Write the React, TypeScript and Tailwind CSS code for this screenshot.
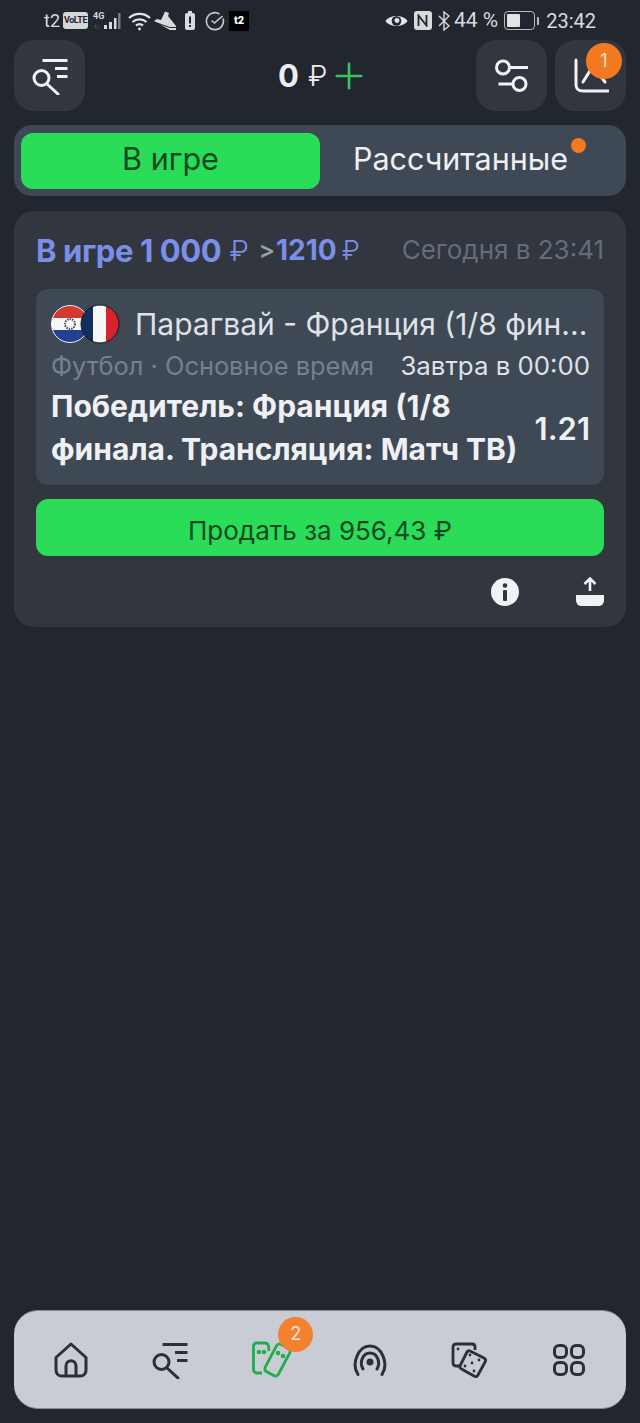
import { Plus } from "lucide-react";

const statusText = "font-['Roboto',sans-serif] text-[#d9dadc]";

function SearchListIcon({ className, color }: { className?: string; color: string }) {
  return (
    <svg viewBox="0 0 38 38" className={className} fill="none" stroke={color} strokeWidth="3">
      <path d="M11.5 3.5h25M24 11.5h12.5M26 19.5h10.5" />
      <circle cx="10.5" cy="21" r="7.5" />
      <path d="M16 27l11 10" strokeLinecap="round" />
    </svg>
  );
}

function StatusBar() {
  return (
    <div className="-mx-[14px] flex h-10 shrink-0 items-center justify-between pl-[44px] pr-[44px] pt-[1px]">
      <div className="flex items-center">
        <span className={`${statusText} text-[18px] leading-none`}>t2</span>
        <span className="ml-[3px] flex h-[17px] w-[25px] items-center justify-center rounded-[3px] bg-[#d6d7d9] font-['Roboto',sans-serif] text-[9px] font-bold leading-none tracking-[-0.4px] text-[#22262f]">
          VoLTE
        </span>
        <svg viewBox="0 0 32 22" className="ml-[5px] h-[22px] w-[32px]" fill="#d9dadc">
          <text x="0" y="9" fontSize="9" fontWeight="700" fontFamily="Roboto, sans-serif">4G</text>
          <text x="1" y="19" fontSize="6" fill="#777b82" fontFamily="Roboto, sans-serif">1↓</text>
          <rect x="11" y="15" width="3" height="4" />
          <rect x="16" y="12" width="3" height="7" />
          <rect x="21" y="8" width="2.5" height="11" fill="#d9dadc" />
          <rect x="25" y="3" width="2.5" height="16" fill="#777b82" />
        </svg>
        <svg viewBox="0 0 24 20" className="ml-[3px] h-[20px] w-[24px]" fill="none" stroke="#e2e3e5" strokeWidth="2.2">
          <path d="M1 7c6-5.500 15-5.500 21 0M4.500 11c4-3.500 10-3.500 14 0M8 14.500c2-1.500 5-1.500 7 0" />
          <circle cx="11.500" cy="18" r="1.400" fill="#e2e3e5" stroke="none" />
        </svg>
        {/* sneaker */}
        <svg viewBox="0 0 22 20" className="ml-[2px] h-[20px] w-[22px]">
          <path d="M11 0.500l4 1.500-1 3 8 10v4h-6L0 10l3-2 4 1 2-4z" fill="#d9dadc" />
          <path d="M1.500 11.500L16 16.500h6" fill="none" stroke="#22262f" strokeWidth="1" />
        </svg>
        <svg viewBox="0 0 12 20" className="ml-[8px] h-[20px] w-[12px]">
          <rect x="4" y="0" width="4" height="2" fill="#d9dadc" />
          <rect x="1" y="2" width="10" height="17" rx="2" fill="#d9dadc" />
          <rect x="5" y="5.500" width="2" height="7" fill="#22262f" />
          <rect x="5" y="14" width="2" height="2" fill="#22262f" />
        </svg>
        <svg viewBox="0 0 20 20" className="ml-[9px] h-[20px] w-[20px]" fill="none" stroke="#c9cacc" strokeWidth="1.6">
          <path d="M18 7.500A8.500 8.500 0 1 1 14.500 3" />
          <path d="M6.500 9.500l3 2.500 8-7" />
        </svg>
        <span className="ml-[4px] flex h-[20px] w-[20px] items-center justify-center bg-black font-['Roboto',sans-serif] text-[11px] font-black leading-none text-white">
          t2
        </span>
      </div>
      <div className="flex items-center">
        <svg viewBox="0 0 24 16" className="h-[16px] w-[23px]">
          <path d="M0.500 8C5 1 19 1 23.500 8C19 15 5 15 0.500 8Z" fill="#e2e3e5" />
          <circle cx="12" cy="8" r="5" fill="#22262f" />
          <circle cx="12.500" cy="7.500" r="2.600" fill="#e2e3e5" />
        </svg>
        <span className="ml-[6px] flex h-[19px] w-[18px] items-center justify-center rounded-[3px] bg-[#d9dadc]">
          <svg viewBox="0 0 13 13" className="h-[13px] w-[13px]" fill="none" stroke="#22262f" strokeWidth="1.8">
            <path d="M2.500 12V1.500l8 10V1" />
          </svg>
        </span>
        <svg viewBox="0 0 12 20" className="ml-[6px] h-[20px] w-[12px]" fill="none" stroke="#d9dadc" strokeWidth="1.400">
          <path d="M1 5l10 10-5 4V1l5 4L1 15" />
        </svg>
        <span className={`${statusText} ml-[4px] whitespace-nowrap text-[21px] leading-none`}>44 %</span>
        <span className="ml-[6px] flex h-[19px] w-[31px] items-center rounded-[4px] border-[1.5px] border-[#b9babc] p-[2px]">
          <span className="h-full w-[13px] rounded-[1px] bg-[#e2e3e5]" />
        </span>
        <span className="ml-[2px] h-[8px] w-[2px] rounded-r-[1px] bg-[#b9babc]" />
        <span className={`${statusText} ml-[7px] text-[20px] leading-none`}>23:42</span>
      </div>
    </div>
  );
}

function TopBar() {
  return (
    <div className="flex h-[71px] shrink-0 items-center">
      <button className="flex h-[71px] w-[71px] items-center justify-center rounded-[20px] bg-[#31363f]">
        <SearchListIcon className="h-[38px] w-[38px]" color="#f1f2f4" />
      </button>
      <div className="flex flex-1 items-center pl-[193px]">
        <span className="text-[31px] font-bold leading-none text-[#eceef0]">0</span>
        <span className="ml-[9px] text-[29px] font-light leading-none text-[#eceef0]">₽</span>
        <Plus className="ml-[1px] h-[42px] w-[42px] text-[#3ec15f]" strokeWidth={1.5} />
      </div>
      <div className="flex gap-[8px]">
        <button className="flex h-[71px] w-[71px] items-center justify-center rounded-[20px] bg-[#31363f]">
          <svg viewBox="0 0 36 36" className="h-[36px] w-[36px]" fill="none" stroke="#f1f2f4" strokeWidth="3">
            <circle cx="9" cy="9.500" r="6.500" />
            <path d="M15.500 9.500H34" />
            <circle cx="25.500" cy="26" r="6.500" />
            <path d="M4.500 26h14.500" />
          </svg>
        </button>
        <button className="relative flex h-[71px] w-[71px] items-center justify-center rounded-[20px] bg-[#31363f]">
          <svg viewBox="0 0 36 36" className="h-[36px] w-[36px]" fill="none" stroke="#f1f2f4" strokeWidth="3" strokeLinecap="round">
            <path d="M3 2v25c0 4 3 6 7 6h25" />
            <path d="M10 24l10-16 12 16" />
          </svg>
          <span className="absolute right-[4px] top-[3px] flex h-[36px] w-[36px] items-center justify-center rounded-full bg-[#f47a22] text-[18px] leading-none text-[#f6e3d4]">
            1
          </span>
        </button>
      </div>
    </div>
  );
}

function Tabs() {
  return (
    <div className="mt-[14px] flex h-[71px] shrink-0 items-center rounded-[18px] bg-[#3f4855] pl-[7px] pr-[7px]">
      <div className="flex h-[56px] w-[299px] items-center justify-center rounded-[12px] bg-[#2bdc58] pb-[2px] text-[30.5px] leading-none text-[#0f4a22]">
        В игре
      </div>
      <div className="relative flex h-[56px] flex-1 items-center justify-center pb-[2px] pr-[18px] text-[30.5px] leading-none text-[#eef0f3]">
        Рассчитанные
        <span className="absolute right-[33px] top-[5px] h-[15px] w-[15px] rounded-full bg-[#f47a22]" />
      </div>
    </div>
  );
}

function Flags() {
  return (
    <div className="relative h-[40px] w-[68px] shrink-0">
      <svg viewBox="0 0 38 38" className="absolute left-0 top-[1px] h-[38px] w-[38px]">
        <clipPath id="py">
          <circle cx="19" cy="19" r="18.500" />
        </clipPath>
        <g clipPath="url(#py)">
          <rect width="38" height="13" fill="#d5382f" />
          <rect y="13" width="38" height="12" fill="#f7f7f7" />
          <rect y="25" width="38" height="13" fill="#233f93" />
          <circle cx="19" cy="19" r="5" fill="none" stroke="#4b4f55" strokeWidth="2" strokeDasharray="1.500 1" />
        </g>
        <circle cx="19" cy="19" r="18.500" fill="none" stroke="#f1f1f1" strokeWidth="1" />
      </svg>
      <svg viewBox="0 0 40 40" className="absolute left-[29px] top-0 h-[40px] w-[40px]">
        <clipPath id="fr">
          <circle cx="20" cy="20" r="19" />
        </clipPath>
        <g clipPath="url(#fr)">
          <rect width="14" height="40" fill="#12305f" />
          <rect x="13" width="14" height="40" fill="#f7f7f7" />
          <rect x="26" width="14" height="40" fill="#d8232f" />
        </g>
        <circle cx="20" cy="20" r="19" fill="none" stroke="#15181d" strokeWidth="1" />
      </svg>
    </div>
  );
}

function BetCard() {
  return (
    <div className="mt-[15px] flex h-[416px] shrink-0 flex-col rounded-[20px] bg-[#31363f] px-[22px]">
      <div className="mt-[21px] flex h-[36px] items-center justify-between whitespace-nowrap">
        <div className="flex items-center text-[#7b8fe8]">
          <span className="text-[31px] font-bold leading-none tracking-[-0.4px]">В игре 1 000</span>
          <span className="ml-[8px] text-[29px] font-light leading-none">₽</span>
          <span className="ml-[10px] text-[24px] font-semibold leading-none text-[#9a9fa8]">&gt;</span>
          <span className="ml-[1px] text-[28px] font-bold leading-none">1210</span>
          <span className="ml-[5px] text-[27px] font-light leading-none">₽</span>
        </div>
        <span className="text-[26px] leading-none text-[#656d7b]">Сегодня в 23:41</span>
      </div>
      <div className="mt-[21px] flex h-[196px] shrink-0 flex-col rounded-[12px] bg-[#3f4855] pl-[15px] pr-[14px] pt-[15px]">
        <div className="flex h-[40px] items-center">
          <Flags />
          <span className="ml-[16px] whitespace-nowrap text-[30px] leading-none text-[#dfe2e6]">Парагвай - Франция (1/8 фин...</span>
        </div>
        <div className="mt-[7px] flex h-[30px] items-center justify-between whitespace-nowrap leading-none">
          <span className="text-[25.4px] text-[#788090]">Футбол · Основное время</span>
          <span className="text-[25.8px] text-[#dfe2e6]">Завтра в 00:00</span>
        </div>
        <div className="mt-[4px] flex items-center justify-between">
          <span className="w-[476px] text-[30px] font-bold leading-[43px] text-[#eef0f3]">
            Победитель: Франция (1/8 финала. Трансляция: Матч ТВ)
          </span>
          <span className="text-[31px] font-semibold leading-none text-[#eef0f3]">1.21</span>
        </div>
      </div>
      <button className="mt-[14px] flex h-[57px] shrink-0 items-start justify-center overflow-hidden rounded-[12px] bg-[#2bdc58] pt-[17px] text-[26px] leading-[29px] text-[#0f4a22]">
        Продать за 956,43 ₽
      </button>
      <div className="mt-[21px] flex items-center justify-end">
        <svg viewBox="0 0 30 30" className="h-[30px] w-[30px]">
          <circle cx="15" cy="15" r="14" fill="#f1f2f4" />
          <circle cx="15" cy="8.500" r="2.300" fill="#31363f" />
          <rect x="13" y="13" width="4" height="11" rx="1" fill="#31363f" />
        </svg>
        <svg viewBox="0 0 30 30" className="-mr-[1px] ml-[55px] h-[30px] w-[30px]">
          <path d="M15 14V2M9.500 7L15 1.500 20.500 7" fill="none" stroke="#f1f2f4" strokeWidth="2.600" />
          <path d="M1 18h28v5c0 3-2 6-5 6H6c-3 0-5-3-5-6z" fill="#f1f2f4" />
        </svg>
      </div>
    </div>
  );
}

function BottomNav() {
  const dark = "#2b2f38";
  return (
    <nav className="mb-[14px] mt-auto grid h-[99px] shrink-0 grid-cols-6 items-center justify-items-center rounded-[24px] border-t border-b border-[#868b96] bg-[#c8ccd5] px-[7px]">
      <svg viewBox="0 0 34 36" className="h-[36px] w-[34px]" fill="none" stroke={dark} strokeWidth="3" strokeLinejoin="round">
        <path d="M2 15.500L17 2l15 13.500V28c0 3-2 6-5 6H7c-3 0-5-3-5-6z" />
        <path d="M12 34V24c0-7 10-7 10 0v10" />
      </svg>
      <SearchListIcon className="h-[38px] w-[38px]" color={dark} />
      <div className="relative ml-[4px] h-[38px] w-[40px]">
        <svg viewBox="0 0 40 38" className="h-[38px] w-[40px]" fill="none" stroke="#1fae4b" strokeWidth="2.800" strokeLinejoin="round">
          <path d="M10 32H5c-2 0-3.500-1.500-3.500-3.500V5C1.500 3 3 2 4.500 2H13c2 0 3 1 3.500 3l.5 5" />
          <rect x="18" y="3.500" width="15" height="31" rx="3.500" transform="rotate(28 25.500 19)" />
          <circle cx="7" cy="11" r="0.900" fill="#1fae4b" />
          <circle cx="12" cy="11" r="0.900" fill="#1fae4b" />
          <circle cx="26" cy="12" r="0.900" fill="#1fae4b" />
          <circle cx="31" cy="15" r="0.900" fill="#1fae4b" />
        </svg>
        <span className="absolute left-[26px] top-[-24px] flex h-[35px] w-[35px] items-center justify-center rounded-full bg-[#f4812f] text-[18px] leading-none text-[#f6e3d4]">
          2
        </span>
      </div>
      <svg viewBox="0 0 36 32" className="h-[32px] w-[36px]" fill="none" stroke={dark} strokeWidth="3">
        <path d="M6 30.500C-1 20 6 2 18 2s19 18 12 28.500" strokeLinecap="round" />
        <path d="M11 25C7 18 11 9 18 9s11 9 7 16" strokeLinecap="round" />
        <circle cx="18" cy="18" r="3.500" fill={dark} stroke="none" />
      </svg>
      <svg viewBox="0 0 36 36" className="h-[36px] w-[36px]" fill="none" stroke={dark} strokeWidth="2.800" strokeLinejoin="round">
        <path d="M10 24H5c-2 0-3-1-3-3V5c0-2 1-3 3-3h16c2 0 3 1 3 3v3" />
        <path d="M19 9l14 7c1.500.8 2 2 1.300 3.500L27 33c-.8 1.500-2 2-3.500 1.300L10.500 27c-1.500-.8-2-2-1.300-3.500L16 10c.6-1 2-1.500 3-1z" />
        <circle cx="7" cy="7" r="1.400" fill={dark} stroke="none" />
        <circle cx="19" cy="13" r="1.400" fill={dark} stroke="none" />
        <circle cx="28" cy="18" r="1.400" fill={dark} stroke="none" />
        <circle cx="21" cy="21" r="1.400" fill={dark} stroke="none" />
        <circle cx="14" cy="24" r="1.400" fill={dark} stroke="none" />
        <circle cx="23" cy="29" r="1.400" fill={dark} stroke="none" />
      </svg>
      <div className="grid grid-cols-2 gap-[2px]">
        <span className="h-[15px] w-[15px] rounded-[6px] border-[3px] border-[#2b2f38]" />
        <span className="h-[15px] w-[15px] rounded-[6px] border-[3px] border-[#2b2f38]" />
        <span className="h-[15px] w-[15px] rounded-[6px] border-[3px] border-[#2b2f38]" />
        <span className="h-[15px] w-[15px] rounded-[6px] border-[3px] border-[#2b2f38]" />
      </div>
    </nav>
  );
}

export default function App() {
  return (
    <div className="flex h-[1423px] w-[640px] flex-col overflow-hidden bg-[#22262f] px-[14px] font-['Inter',sans-serif]">
      <StatusBar />
      <TopBar />
      <Tabs />
      <BetCard />
      <BottomNav />
    </div>
  );
}
